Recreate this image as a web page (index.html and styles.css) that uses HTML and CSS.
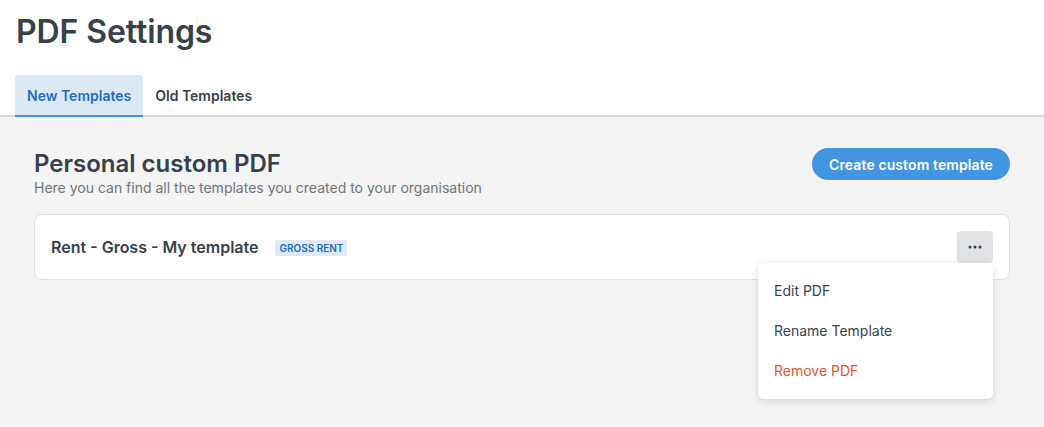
FILE: index.html
```html
<!DOCTYPE html>
<html>
<head>
<meta charset="utf-8">
<link rel="stylesheet" href="styles.css">
</head>
<body>
<div class="page">
  <header class="top">
    <h1 class="title">PDF Settings</h1>
    <nav class="tabs">
      <div class="tab tab-active">New Templates</div>
      <div class="tab">Old Templates</div>
    </nav>
  </header>
  <main class="main">
    <div class="section-head">
      <div class="section-text">
        <h2 class="section-title">Personal custom PDF</h2>
        <p class="section-sub">Here you can find all the templates you created to your organisation</p>
      </div>
      <button class="btn-primary">Create custom template</button>
    </div>
    <div class="card">
      <div class="card-left">
        <span class="card-name">Rent - Gross - My template</span>
        <span class="badge">GROSS RENT</span>
      </div>
      <div class="more-wrap">
        <button class="more-btn" aria-label="More">
          <svg width="14" height="4" viewBox="0 0 14 4"><circle cx="2" cy="2" r="1.5" fill="#333b44"/><circle cx="7" cy="2" r="1.5" fill="#333b44"/><circle cx="12" cy="2" r="1.5" fill="#333b44"/></svg>
        </button>
        <div class="menu">
          <div class="menu-item">Edit PDF</div>
          <div class="menu-item">Rename Template</div>
          <div class="menu-item menu-danger">Remove PDF</div>
        </div>
      </div>
    </div>
  </main>
</div>
</body>
</html>
```
FILE: styles.css
```css
* { box-sizing: border-box; }
html, body { margin: 0; padding: 0; }
body {
  font-family: Inter, "Noto Sans", sans-serif;
  color: #38424d;
  background: #f4f4f4;
  width: 1044px;
  height: 427px;
  overflow: hidden;
}
.page { display: flex; flex-direction: column; height: 427px; }
.top {
  background: #ffffff;
  border-bottom: 2px solid #d9d9d9;
  padding: 0 15px;
}
.title {
  margin: 0;
  padding: 12px 0 0 1px;
  font-size: 32px;
  line-height: 40px;
  font-weight: 600;
  color: #36414b;
  letter-spacing: -0.1px;
}
.tabs {
  display: flex;
  margin-top: 23px;
  margin-bottom: -2px;
}
.tab {
  height: 42px;
  padding: 0 12px;
  display: flex;
  align-items: center;
  font-size: 14px;
  font-weight: 600;
  color: #36414b;
  border-bottom: 2px solid transparent;
  border-radius: 4px 4px 0 0;
}
.tab-active {
  background: #dde8f5;
  color: #1a6fc4;
  border-bottom-color: #3f92e2;
}
.main {
  flex: 1;
  padding: 31px 34px 0 34px;
}
.section-head {
  display: flex;
  justify-content: space-between;
  align-items: flex-start;
}
.section-title {
  margin: 0;
  padding-top: 1px;
  font-size: 24px;
  line-height: 30px;
  font-weight: 600;
  color: #36414b;
}
.section-sub {
  margin: 0;
  font-size: 14px;
  line-height: 18px;
  color: #6f757b;
}
.btn-primary {
  margin-top: 0;
  height: 32px;
  padding: 0 17px;
  border: none;
  border-radius: 16px;
  background: #4295e0;
  color: #ffffff;
  font-family: inherit;
  font-size: 14px;
  font-weight: 600;
  letter-spacing: 0.1px;
}
.card {
  margin-top: 17px;
  background: #ffffff;
  border: 1px solid #e1e1e1;
  border-radius: 8px;
  height: 66px;
  padding: 0 16px;
  display: flex;
  align-items: center;
  justify-content: space-between;
}
.card-left { display: flex; align-items: center; }
.card-name {
  font-size: 16px;
  font-weight: 600;
  color: #36414b;
  margin-right: 17px;
}
.badge {
  background: #dfe9f5;
  color: #1a6fc4;
  font-size: 10px;
  font-weight: 600;
  padding: 0 4px;
  height: 16px;
  line-height: 16px;
  border-radius: 2px;
  margin-top: 1px;
}
.more-wrap { position: relative; }
.more-btn {
  width: 36px;
  height: 32px;
  border: none;
  border-radius: 4px;
  background: #e2e3e5;
  display: flex;
  align-items: center;
  justify-content: center;
  padding: 0;
}
.menu {
  position: absolute;
  right: 0;
  top: 32px;
  width: 235px;
  background: #ffffff;
  border-radius: 6px;
  box-shadow: 0 2px 8px rgba(0,0,0,0.15);
  padding: 8px 0;
  z-index: 5;
}
.menu-item {
  height: 40px;
  line-height: 40px;
  padding: 0 16px;
  font-size: 14px;
  color: #38424d;
}
.menu-danger { color: #e5532b; }
```
